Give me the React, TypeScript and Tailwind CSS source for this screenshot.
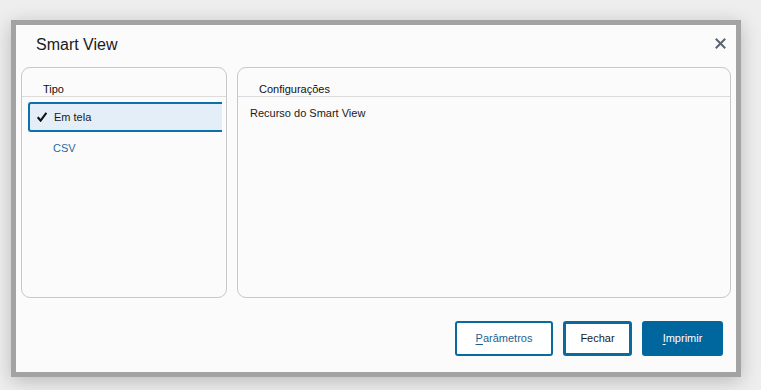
import React from "react";

export default function App() {
  return (
    <div
      className="w-[761px] h-[390px] bg-[#eeeeee] overflow-hidden"
      style={{ fontFamily: '"Liberation Sans", Arial, sans-serif' }}
    >
      <div className="ml-[11px] mt-[20px] w-[730px] h-[357px] border-[5px] border-[#a3a3a3] bg-[#fbfbfb] shadow-[0_4px_18px_rgba(0,0,0,0.22)] flex flex-col">
        {/* title bar */}
        <div className="h-[42px] flex items-start justify-between pl-[20px] pr-[10px] pt-[9px]">
          <span className="text-[16px] leading-[22px] text-[#1a1a1a]">Smart View</span>
          <svg width="11" height="11" viewBox="0 0 11 11" className="mt-[4px]">
            <path d="M1.5 1.5 L9.5 9.5 M9.5 1.5 L1.5 9.5" stroke="#5b6470" strokeWidth="2" strokeLinecap="square" />
          </svg>
        </div>
        {/* panels */}
        <div className="flex gap-[10px] px-[5px] h-[231px]">
          <div className="w-[206px] h-full border border-[#c8c8c8] rounded-[9px] flex flex-col overflow-hidden">
            <div className="h-[29px] border-b border-[#dcdcdc] flex items-end pl-[21px] pb-0">
              <span className="text-[11px] leading-[13px] text-[#111]">Tipo</span>
            </div>
            <div className="pt-[5px] pl-[6px] pr-[4px]">
              <div className="h-[30px] border-y-2 border-l-2 border-[#0a71ad] rounded-l-[3px] bg-[#e3eef9] flex items-center pl-[7px]">
                <svg width="10" height="10" viewBox="0 0 10 10">
                  <path d="M0.8 5.2 L3.6 8.6 L9.4 0.8" stroke="#111" strokeWidth="2.1" fill="none" />
                </svg>
                <span className="ml-[7px] text-[11px] text-[#1a1a1a]">Em tela</span>
              </div>
              <div className="h-[32px] flex items-center pl-[25px]">
                <span className="text-[11px] text-[#1f6aa5]">CSV</span>
              </div>
            </div>
          </div>
          <div className="flex-1 h-full border border-[#c8c8c8] rounded-[9px] flex flex-col overflow-hidden">
            <div className="h-[29px] border-b border-[#dcdcdc] flex items-end pl-[21px] pb-0">
              <span className="text-[11px] leading-[13px] text-[#111]">Configurações</span>
            </div>
            <div className="pl-[12px] pt-[10px]">
              <span className="block text-[11px] leading-[13px] text-[#1a1a1a]">Recurso do Smart View</span>
            </div>
          </div>
        </div>
        {/* buttons */}
        <div className="flex justify-end gap-[10px] pr-[13px] mt-[23px]">
          <button className="w-[98px] h-[35px] border-2 border-[#0a6aa0] rounded-[3px] bg-white text-[11px] text-[#1f5f8e]">
            <span className="underline underline-offset-2">P</span>arâmetros
          </button>
          <button className="w-[69px] h-[35px] border-[3px] border-[#0a6aa0] rounded-[3px] bg-white text-[11px] text-[#1a1a1a]">
            Fechar
          </button>
          <button className="w-[81px] h-[35px] rounded-[3px] bg-[#00679e] text-[11px] text-white">
            <span className="underline underline-offset-2">I</span>mprimir
          </button>
        </div>
      </div>
    </div>
  );
}
